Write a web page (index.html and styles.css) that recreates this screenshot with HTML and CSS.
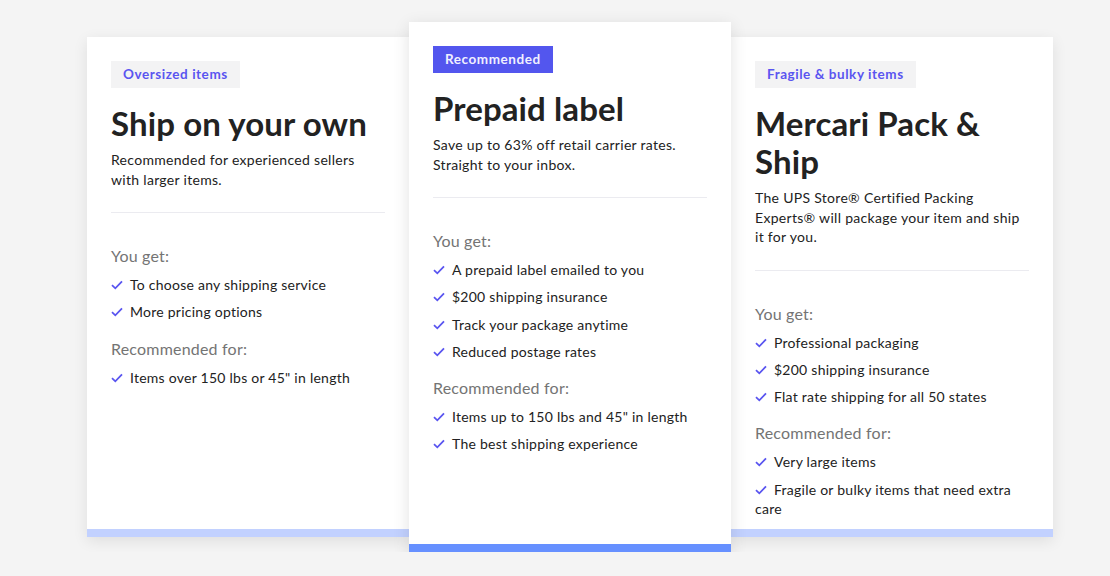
FILE: index.html
```html
<!DOCTYPE html>
<html>
<head>
    <title>Shipping options</title>
    <link rel="stylesheet" href="styles.css">
</head>
<body>

<div class="options">

    <!-- Ship on your own -->
    <div class="card">
        <span class="tag">Oversized items</span>
        <h2>Ship on your own</h2>
        <p class="desc">Recommended for experienced sellers with larger items.</p>
        <hr>
        <h3>You get:</h3>
        <ul>
            <li><svg class="check" viewBox="0 0 12 10"><path d="M1 5.2l3.3 3.1L11 1.4"/></svg>To choose any shipping service</li>
            <li><svg class="check" viewBox="0 0 12 10"><path d="M1 5.2l3.3 3.1L11 1.4"/></svg>More pricing options</li>
        </ul>
        <h3>Recommended for:</h3>
        <ul>
            <li><svg class="check" viewBox="0 0 12 10"><path d="M1 5.2l3.3 3.1L11 1.4"/></svg>Items over 150 lbs or 45" in length</li>
        </ul>
    </div>

    <!-- Prepaid label (featured) -->
    <div class="card featured">
        <span class="tag">Recommended</span>
        <h2>Prepaid label</h2>
        <p class="desc">Save up to 63% off retail carrier rates. Straight to your inbox.</p>
        <hr>
        <h3>You get:</h3>
        <ul>
            <li><svg class="check" viewBox="0 0 12 10"><path d="M1 5.2l3.3 3.1L11 1.4"/></svg>A prepaid label emailed to you</li>
            <li><svg class="check" viewBox="0 0 12 10"><path d="M1 5.2l3.3 3.1L11 1.4"/></svg>$200 shipping insurance</li>
            <li><svg class="check" viewBox="0 0 12 10"><path d="M1 5.2l3.3 3.1L11 1.4"/></svg>Track your package anytime</li>
            <li><svg class="check" viewBox="0 0 12 10"><path d="M1 5.2l3.3 3.1L11 1.4"/></svg>Reduced postage rates</li>
        </ul>
        <h3>Recommended for:</h3>
        <ul>
            <li><svg class="check" viewBox="0 0 12 10"><path d="M1 5.2l3.3 3.1L11 1.4"/></svg>Items up to 150 lbs and 45" in length</li>
            <li><svg class="check" viewBox="0 0 12 10"><path d="M1 5.2l3.3 3.1L11 1.4"/></svg>The best shipping experience</li>
        </ul>
    </div>

    <!-- Mercari Pack & Ship -->
    <div class="card">
        <span class="tag">Fragile &amp; bulky items</span>
        <h2>Mercari Pack &amp; Ship</h2>
        <p class="desc">The UPS Store® Certified Packing Experts® will package your item and ship it for you.</p>
        <hr>
        <h3>You get:</h3>
        <ul>
            <li><svg class="check" viewBox="0 0 12 10"><path d="M1 5.2l3.3 3.1L11 1.4"/></svg>Professional packaging</li>
            <li><svg class="check" viewBox="0 0 12 10"><path d="M1 5.2l3.3 3.1L11 1.4"/></svg>$200 shipping insurance</li>
            <li><svg class="check" viewBox="0 0 12 10"><path d="M1 5.2l3.3 3.1L11 1.4"/></svg>Flat rate shipping for all 50 states</li>
        </ul>
        <h3>Recommended for:</h3>
        <ul>
            <li><svg class="check" viewBox="0 0 12 10"><path d="M1 5.2l3.3 3.1L11 1.4"/></svg>Very large items</li>
            <li><svg class="check" viewBox="0 0 12 10"><path d="M1 5.2l3.3 3.1L11 1.4"/></svg>Fragile or bulky items that need extra care</li>
        </ul>
    </div>

</div>

</body>
</html>
```

FILE: styles.css
```css
/* General Styles */
body {
    margin: 0;
    font-family: Lato, "Noto Sans", sans-serif;
    background-color: #f4f4f4;
    color: #222;
}

.options {
    display: flex;
    align-items: flex-start;
    padding: 37px 0 0 87px;
}

/* Cards */
.card {
    box-sizing: border-box;
    width: 322px;
    height: 500px;
    padding: 24px 24px 0;
    background-color: white;
    border-bottom: 8px solid #c2d1ff;
    box-shadow: 0 4px 14px rgba(0, 0, 0, 0.09);
    display: flex;
    flex-direction: column;
    align-items: flex-start;
}

.card.featured {
    height: 530px;
    margin-top: -15px;
    border-bottom-color: #6690ff;
    box-shadow: 0 4px 16px rgba(0, 0, 0, 0.12);
    position: relative;
    z-index: 1;
}

.tag {
    display: inline-block;
    height: 27px;
    line-height: 27px;
    padding: 0 12px;
    font-size: 13.5px;
    font-weight: 700;
    letter-spacing: 0.55px;
    color: #5a55f0;
    background-color: #f3f3f4;
}

.featured .tag {
    background-color: #5356ee;
    color: #f0f0ff;
}

.card h2 {
    margin: 16px 0 0;
    font-size: 33px;
    line-height: 38px;
    font-weight: 700;
    letter-spacing: 0.1px;
    color: #222;
}

.desc {
    margin: 8px 0 0;
    font-size: 14px;
    line-height: 19.5px;
    letter-spacing: 0.3px;
    color: #222;
}

.card hr {
    align-self: stretch;
    margin: 23px 0 0;
    border: none;
    border-top: 1px solid #ebebf0;
}

.card h3 {
    margin: 32px 0 0;
    font-size: 16px;
    line-height: 22px;
    font-weight: 400;
    letter-spacing: 0.2px;
    color: #747474;
}

.card h3 + ul + h3 {
    margin-top: 12px;
}

.card ul {
    list-style: none;
    margin: 4px 0 0;
    padding: 0;
}

.card li {
    font-size: 14px;
    line-height: 19.3px;
    letter-spacing: 0.25px;
    padding: 4px 0;
}

.check {
    width: 12px;
    height: 10px;
    margin-right: 7px;
    fill: none;
    stroke: #5a55f0;
    stroke-width: 1.8;
}
```
